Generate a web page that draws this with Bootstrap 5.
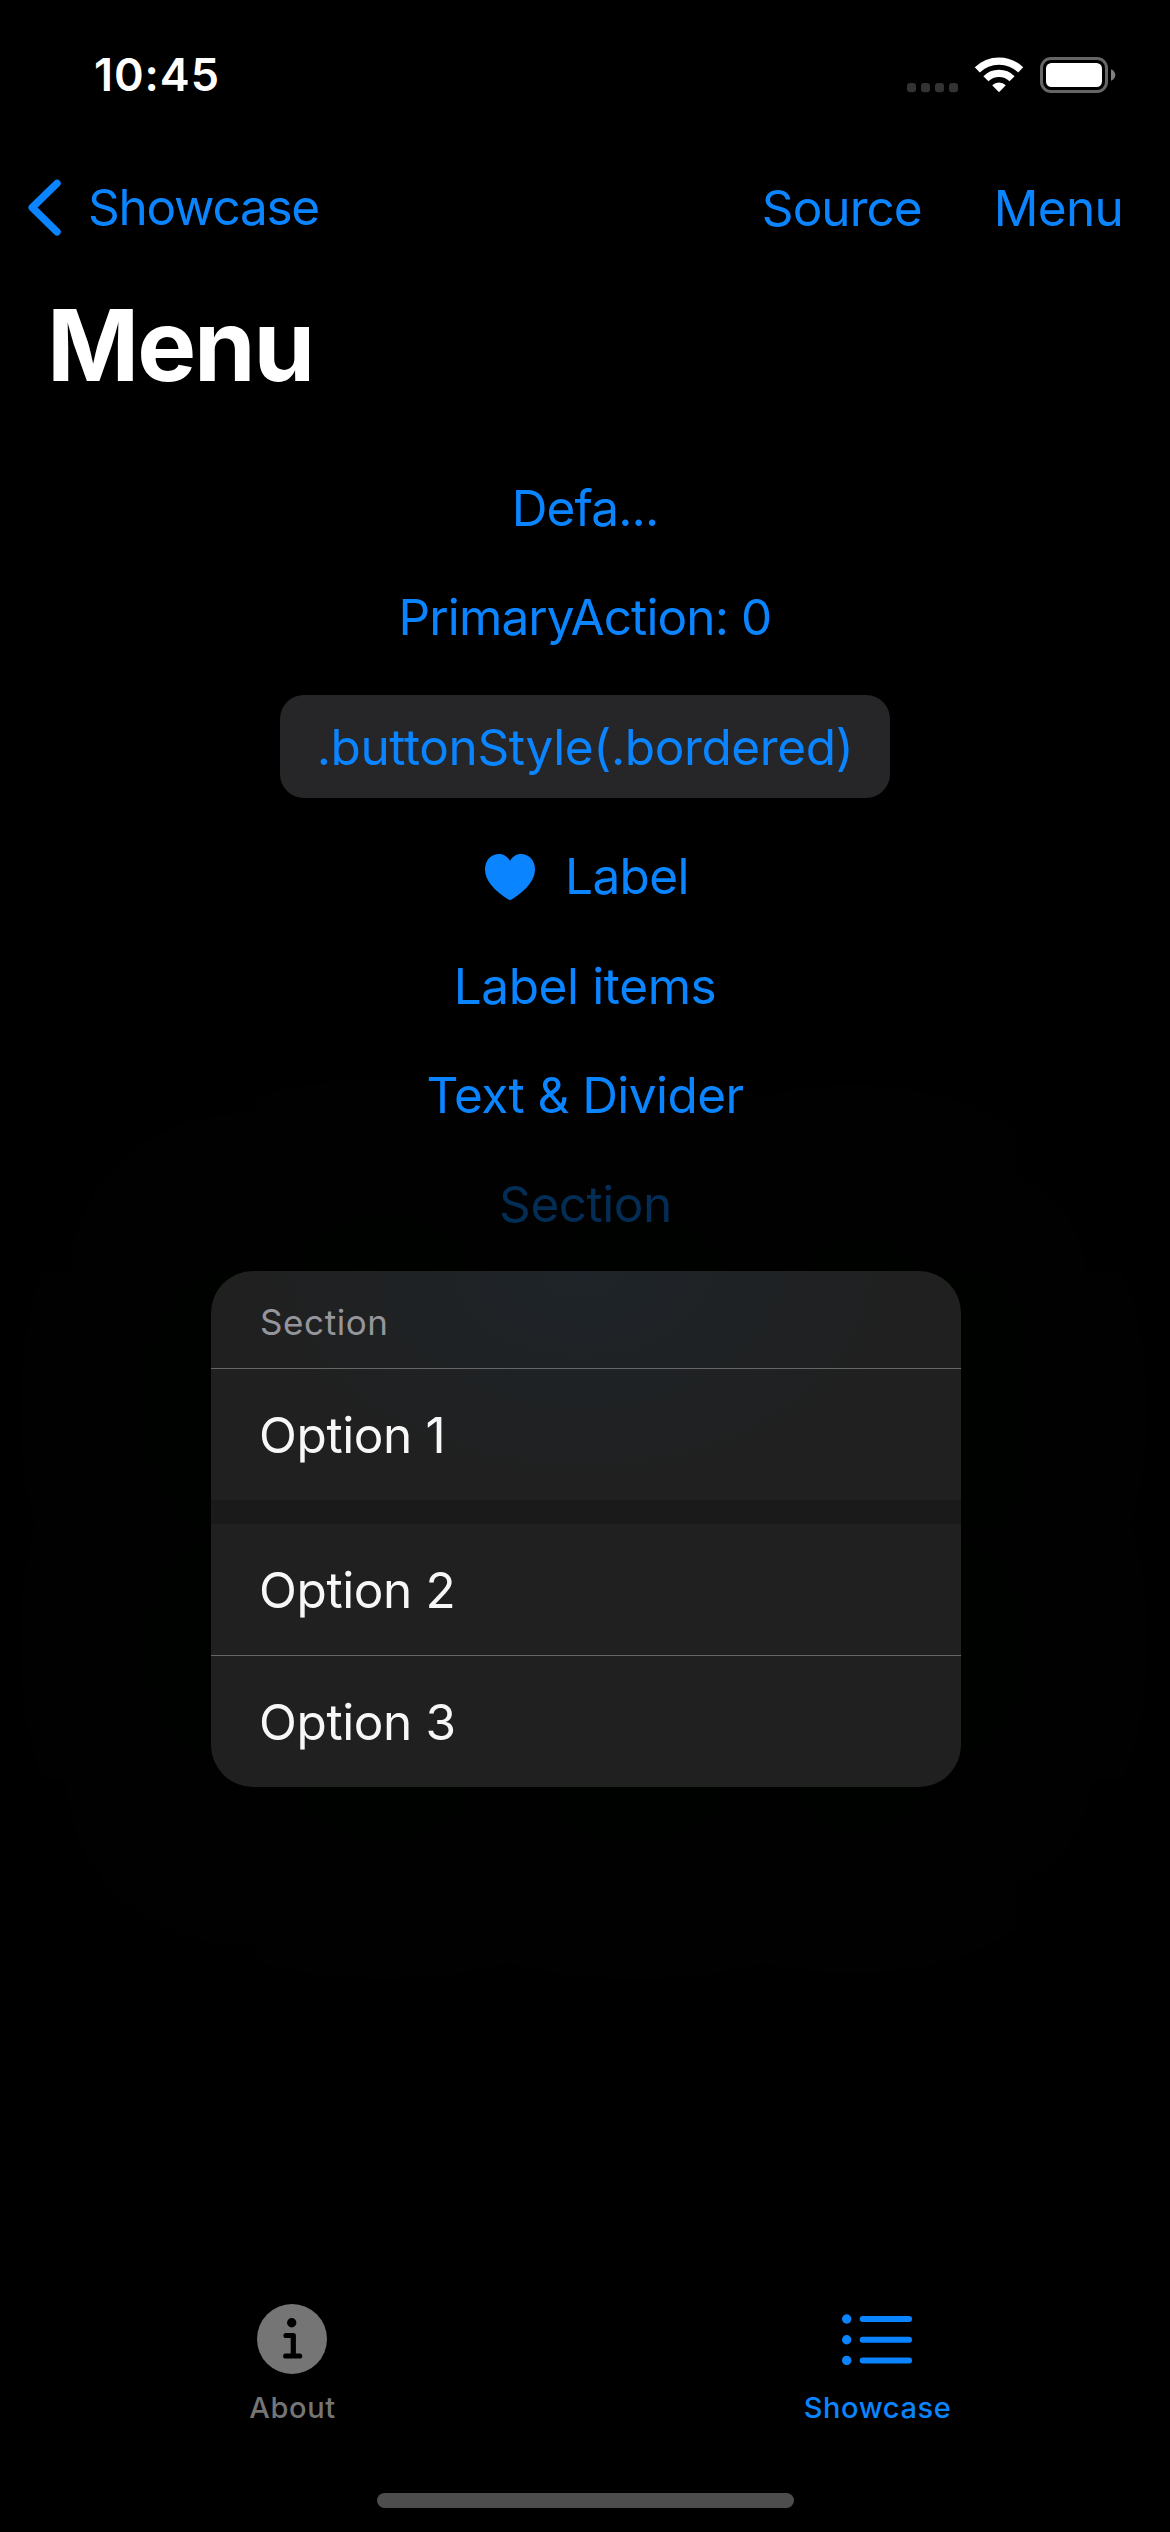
<!DOCTYPE html>
<html lang="en" data-bs-theme="dark">
<head>
<meta charset="utf-8">
<meta name="viewport" content="width=device-width, initial-scale=1">
<title>Menu</title>
<link href="https://cdn.jsdelivr.net/npm/bootstrap@5.3.0/dist/css/bootstrap.min.css" rel="stylesheet">
<style>
  :root { --tint: #0a84ff; }
  body { background: #000; color: #fff; font-family: Inter, "Liberation Sans", sans-serif; font-size: 49.5px; line-height: 61px; overflow: hidden; }
  svg { display: block; flex: none; }
  .screen { height: 2532px; }
  .tint { color: var(--tint); }
  .status-bar { height: 149px; padding: 0 54px 0 94px; }
  .clock { font-size: 45px; font-weight: 600; letter-spacing: .9px; }
  .title-bar { height: 118px; padding: 0 47px 0 27px; }
  .title-bar a, .actions > a { text-decoration: none; color: var(--tint); white-space: nowrap; }
  .back-label { letter-spacing: -1.26px; margin-left: 26px; margin-top: -2px; }
  .go-source { letter-spacing: -.96px; margin-right: 72px; }
  .go-menu { letter-spacing: -.71px; }
  .large-title { height: 156px; line-height: 156px; font-size: 99px; font-weight: 700; letter-spacing: -2.1px; padding-left: 47px; margin: 0; }
  .stage { isolation: isolate; padding-top: 54px; }
  .actions { gap: 48px; }
  .actions > a { height: 61px; line-height: 63px; }
  .actions > .bordered { background: #262628; border-radius: 24px; height: 103px; width: 610px; letter-spacing: -.39px; padding-top: 1px; }
  .actions > .pressed { color: #032d54; letter-spacing: -.46px; padding-left: 1px; }
  .heart-row { padding-left: 4px; letter-spacing: -.59px; gap: 30px; }
  .popup { position: relative; z-index: -1; width: 750px; margin-top: 37px; margin-left: 2px; border-radius: 42px;
    background: radial-gradient(ellipse 330px 220px at 370px 0, #1e2429, #20222500), #202020;
    box-shadow: 0 0 300px 140px #000300; }
  .popup > div { padding-left: 48px; height: 131px; line-height: 132px; color: #f7f7f7; letter-spacing: -.38px; }
  .popup > .popup-head { height: 97px; line-height: 103px; font-size: 35px; letter-spacing: .59px; color: #95959b; padding-left: 49px; }
  .popup > hr { height: 1px; margin: 0; border: 0; background: #646664; opacity: 1; }
  .popup > .popup-gap { height: 24px; background: #1a1a1a; }
  .tabs { height: 180px; font-size: 29px; line-height: 36px; font-weight: 500; letter-spacing: .6px; }
  .tabs svg { margin-bottom: 16px; margin-right: 2px; }
  .muted-tab { color: #757575; }
  .home-pill { width: 417px; height: 15px; border-radius: 8px; background: #4d4d4d; margin: 9px auto 24px 377px; }
</style>
</head>
<body>
<div class="screen d-flex flex-column">
  <header class="status-bar d-flex align-items-center justify-content-between">
    <span class="clock">10:45</span>
    <svg width="209" height="36" viewBox="0 0 209 36">
      <g fill="#333"><rect x="0" y="26" width="9" height="9.3" rx="3"/><rect x="14" y="26" width="9" height="9.3" rx="3"/><rect x="28" y="26" width="9" height="9.3" rx="3"/><rect x="42" y="26" width="9" height="9.3" rx="3"/></g>
      <g fill="none" stroke="#fff" stroke-width="7.2"><path d="M70.3 12.9A31 31 0 0 1 113.7 12.9"/><path d="M78.9 21.7A18.6 18.6 0 0 1 105.1 21.7"/></g>
      <path d="M85.2 28.3A9.6 9.6 0 0 1 98.8 28.3L92.8 34.6Q92 35.4 91.2 34.6Z" fill="#fff"/>
      <rect x="134.5" y="1.5" width="65" height="33" rx="9.5" fill="none" stroke="#666" stroke-width="3"/>
      <rect x="139" y="6" width="56" height="24" rx="5.5" fill="#fff"/>
      <path d="M204 12.3C206.700 13.500 208.300 15.600 208.300 18S206.700 22.500 204 23.700Z" fill="#808080"/>
    </svg>
  </header>

  <nav class="title-bar d-flex align-items-center justify-content-between">
    <a href="#" class="d-flex align-items-center">
      <svg width="35" height="58" viewBox="0 0 35 58" fill="none" stroke="currentColor" stroke-width="7.4" stroke-linecap="round" stroke-linejoin="round"><path d="M30 4.400L5.200 28.500L30 52.800"/></svg>
      <span class="back-label">Showcase</span>
    </a>
    <div class="d-flex">
      <a href="#" class="go-source">Source</a>
      <a href="#" class="go-menu">Menu</a>
    </div>
  </nav>

  <h1 class="large-title">Menu</h1>

  <main class="stage flex-grow-1 d-flex flex-column align-items-center">
    <div class="actions d-flex flex-column align-items-center">
      <a href="#" style="letter-spacing:-.86px">Defa...</a>
      <a href="#" style="letter-spacing:-.88px">PrimaryAction: 0</a>
      <a href="#" class="bordered d-flex align-items-center justify-content-center">.buttonStyle(.bordered)</a>
      <a href="#" class="heart-row d-flex align-items-center">
        <svg width="50" height="46" viewBox="0 0 50 46" fill="currentColor"><path d="M25 46C24.300 46 23.400 45.500 22.500 44.900C8.500 35.800 0 26.200 0 15.500C0 6.300 6.100 0 13.900 0C18.800 0 22.700 2.700 25 7C27.300 2.700 31.200 0 36.100 0C43.900 0 50 6.300 50 15.500C50 26.200 41.500 35.800 27.500 44.900C26.600 45.500 25.700 46 25 46Z"/></svg>
        <span>Label</span>
      </a>
      <a href="#" style="letter-spacing:-.38px">Label items</a>
      <a href="#" style="letter-spacing:-.57px">Text &amp; Divider</a>
      <a href="#" class="pressed">Section</a>
    </div>
    <div class="popup">
      <div class="popup-head">Section</div>
      <hr>
      <div>Option 1</div>
      <div class="popup-gap"></div>
      <div>Option 2</div>
      <hr>
      <div>Option 3</div>
    </div>
  </main>

  <footer>
    <div class="tabs row g-0 text-center">
      <div class="col-6 d-flex flex-column align-items-center muted-tab">
        <svg width="70" height="70" viewBox="0 0 70 70"><circle cx="35" cy="35" r="35" fill="currentColor"/><circle cx="34.700" cy="18.700" r="4.700"/><path d="M29 31.500H36.300V52M28.700 52H42.700" fill="none" stroke="#000" stroke-width="5.200" stroke-linecap="round" stroke-linejoin="round"/></svg>
        <span>About</span>
      </div>
      <div class="col-6 d-flex flex-column align-items-center tint">
        <svg width="70" height="70" viewBox="0 0 70 70" fill="currentColor"><circle cx="4.700" cy="15" r="4.700"/><circle cx="4.700" cy="35.700" r="4.700"/><circle cx="4.700" cy="56.400" r="4.700"/><rect x="17.700" y="12" width="52.300" height="6" rx="3"/><rect x="17.700" y="32.700" width="52.300" height="6" rx="3"/><rect x="17.700" y="53.400" width="52.300" height="6" rx="3"/></svg>
        <span>Showcase</span>
      </div>
    </div>
    <div class="home-pill"></div>
  </footer>
</div>
<script src="https://cdn.jsdelivr.net/npm/bootstrap@5.3.0/dist/js/bootstrap.bundle.min.js"></script>
</body>
</html>
